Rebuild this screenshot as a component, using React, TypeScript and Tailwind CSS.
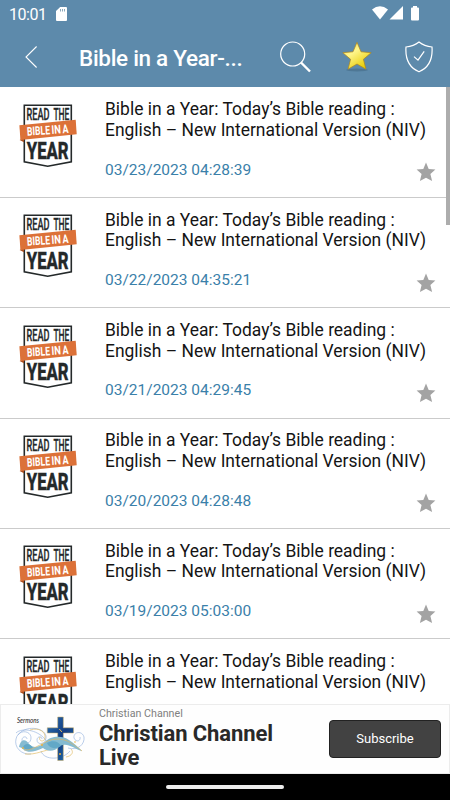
const readings = [
  "03/23/2023 04:28:39",
  "03/22/2023 04:35:21",
  "03/21/2023 04:29:45",
  "03/20/2023 04:28:48",
  "03/19/2023 05:03:00",
];

const STAR = "M10 0.6 L12.7 6.9 L19.4 7.5 L14.4 12 L16.1 19 L10 15.7 L3.9 19 L5.6 12 L0.6 7.5 L7.3 6.9 Z";

const ReadingLogo = () => (
  <svg className="mt-[7.4px] ml-2.5 h-20 w-20 shrink-0" viewBox="0 0 80 80" fontFamily="Roboto, sans-serif">
    <path d="M14.3 10.3 H61.3 V66.8 L37.7 71.2 L14.3 66.8 Z" fill="#fff" stroke="#24292a" strokeWidth="1.6" />
    <g fill="#24292a" stroke="#24292a">
      <text x="16.6" y="24.6" fontSize="15.8" fontWeight="500" strokeWidth="0.3" textLength="23" lengthAdjust="spacingAndGlyphs">READ</text>
      <text x="43.4" y="24.6" fontSize="15.8" fontWeight="500" strokeWidth="0.3" textLength="16" lengthAdjust="spacingAndGlyphs">THE</text>
      <text x="16.8" y="63.6" fontSize="24" fontWeight="800" strokeWidth="0.4" textLength="41.8" lengthAdjust="spacingAndGlyphs">YEAR</text>
    </g>
    <path d="M9.6 45 L14 43 V47.3 Z" fill="#a84d1d" />
    <path d="M9.4 30.3 L65.7 24.8 L66.7 39.2 L10.4 45.1 Z" fill="#dc7138" />
    <g fill="#fff" fontSize="12" fontWeight="700" transform="rotate(-4 37 35)">
      <text x="17" y="39.3" textLength="23" lengthAdjust="spacingAndGlyphs">BIBLE</text>
      <text x="41.4" y="39.3" textLength="9.4" lengthAdjust="spacingAndGlyphs">IN</text>
      <text x="52.6" y="39.3" textLength="6" lengthAdjust="spacingAndGlyphs">A</text>
    </g>
  </svg>
);

const SermonsLogo = () => (
  <svg className="h-[68px] w-[98px] shrink-0" viewBox="0 0 98 68" fill="none">
    <defs>
      <linearGradient id="cross" x1="0" y1="0" x2="1" y2="1">
        <stop offset="0" stopColor="#2d73b6" />
        <stop offset="0.5" stopColor="#113b80" />
        <stop offset="1" stopColor="#2479b8" />
      </linearGradient>
    </defs>
    <text x="16" y="18" fontSize="7" fontStyle="italic" fill="#222" fontFamily="Lato, sans-serif" textLength="22" lengthAdjust="spacingAndGlyphs">Sermons</text>
    <g stroke="#8dacdc" strokeWidth="0.6">
      <path d="M30 49 C20 50 13 42 15 34 C17 24 30 25 30 33 C30 40 21 40 21 35 C21 31 26 31 26 34" />
      <path d="M17 30 C24 20 43 22 45 31 C46 39 36 41 36 35 C36 31 41 31 41 34" />
      <path d="M67 43 C77 46 84 39 83 32 C81 25 72 27 73 33 C75 38 80 36 79 32" />
      <path d="M40 46 C43 56 62 55 69 46" />
      <path d="M15 28 C21 22 39 25 46 37" />
    </g>
    <g stroke="#e3bd68" strokeWidth="0.7">
      <path d="M29 25 C38 22 45 27 44 33 C43 38 37 36 39 32" />
      <path d="M48 40 C52 32 60 31 66 35" />
      <path d="M24 49 C35 50 43 45 52 44" />
      <path d="M65 52 C71 51 73 47 70 44" />
    </g>
    <path d="M56.7 12 H62.3 V22.8 H72.5 V28 H62.3 V55.5 H56.7 V28 H46.3 V22.8 H56.7 Z" fill="url(#cross)" stroke="#cfae62" strokeWidth="0.5" />
    <path d="M18 42 C20 33 25 34 28 39 C33 44 39 42 44 37 C49 31 61 30 68 35 C73 38 77 42 81 46 C72 43 66 37 59 41 C53 47 47 47 42 43 C34 47 27 48 23 45 Q20 42 18 42 Z" fill="#85bbd1" />
    <path d="M46 38 C51 35 58 36 60 41 C54 45 48 43 46 38 Z M22 42 C25 37 29 39 32 43 C28 46 24 45 22 42 Z" fill="#62a8c7" />
    <path d="M23 45 C34 46 44 34 56 34 C67 34 73 40 81 46" stroke="#dcb665" strokeWidth="0.7" />
    <path d="M58.3 24 L61 27" stroke="#e2b859" strokeWidth="1" />
    <g fill="#e8b13d">
      <circle cx="22" cy="43" r="0.9" />
      <circle cx="41" cy="40" r="1" />
      <circle cx="59" cy="49" r="1" />
      <circle cx="74" cy="37" r="0.8" />
    </g>
  </svg>
);

const Header = () => (
  <header className="h-[87.4px] shrink-0 bg-[#5d8aab] text-white">
    <div className="flex h-7 items-center pl-[9px] pr-[30px]">
      <span className="mt-px w-[38px] text-[16px] leading-5 tracking-[-0.45px] whitespace-nowrap">10:01</span>
      <svg className="ml-[9px] h-[15px] w-3" viewBox="0 0 12 15">
        <path d="M4.2 0 H10 Q11 0 11 1 V13 Q11 14 10 14 H1 Q0 14 0 13 V4 Z" fill="#fff" />
        <path d="M4.5 2 V4.5 M6.5 2 V4.5 M8.5 2 V4.5" stroke="#7f9fb3" strokeWidth="0.9" />
      </svg>
      <svg className="ml-auto h-4 w-[50px]" viewBox="0 0 50 16" fill="#fff">
        <path d="M2 3.6 Q10 -3 18 3.6 L10 13.5 Z" />
        <path d="M33 0 V13.5 H19.5 Z" />
        <path d="M43 0 H47 V1.5 H48 Q49 1.5 49 2.5 V13.5 Q49 14.5 48 14.5 H42 Q41 14.5 41 13.5 V2.5 Q41 1.5 42 1.5 H43 Z" />
      </svg>
    </div>
    <div className="flex h-[58px] items-center pl-[25px]">
      <svg className="h-6 w-3.5" viewBox="0 0 14 24" fill="none" stroke="#fff" strokeWidth="1.1">
        <path d="M11.6 1.5 L1 12 L11.6 22.5" />
      </svg>
      <h1 className="mt-px ml-10 w-[165px] text-[22.5px] leading-7 font-medium tracking-[-0.3px] whitespace-nowrap">Bible in a Year-...</h1>
      <svg className="ml-[35px] h-8 w-8" viewBox="0 0 32 32" fill="none" stroke="#fff">
        <circle cx="13.7" cy="13" r="12" strokeWidth="1.2" />
        <path d="M22 21.5 L31 30.5" strokeWidth="2.4" />
      </svg>
      <svg className="ml-[31px] h-8 w-[30px]" viewBox="0 0 30 32">
        <defs>
          <linearGradient id="gold" x1="0" y1="0" x2="0.7" y2="1">
            <stop offset="0" stopColor="#f2d53e" />
            <stop offset="0.42" stopColor="#fff68d" />
            <stop offset="1" stopColor="#e6ca00" />
          </linearGradient>
        </defs>
        <ellipse cx="15" cy="29" rx="11" ry="1.4" fill="#446b87" opacity="0.6" />
        <path d="M15 1.3 L19 10.8 L29.2 11.7 L21.4 18.3 L24 28.2 L15 23 L6 28.2 L8.6 18.3 L0.8 11.7 L11 10.8 Z" fill="url(#gold)" stroke="#ad851e" strokeWidth="0.7" />
      </svg>
      <svg className="ml-[33px] h-8 w-7" viewBox="0 0 28 32" fill="none" stroke="#fff" strokeWidth="1.2">
        <path d="M14 1 C10.5 3.8 6 5.5 1 6 C0.2 17 3.5 26.3 14 30.8 C24.5 26.3 27.8 17 27 6 C22 5.5 17.5 3.8 14 1 Z" />
        <path d="M9 15.6 L13 19.2 L19.2 10.4" />
      </svg>
    </div>
  </header>
);

const ReadingRow = ({ date }: { date?: string }) => (
  <article className="flex h-[110.4px] shrink-0 border-b border-[#cbcbcb]">
    <ReadingLogo />
    <div className="ml-[15px] w-[345px] shrink-0 pt-[11.8px]">
      <h2 className="text-[17.45px] leading-[20.7px] whitespace-nowrap text-[#141414]">
        Bible in a Year: Today’s Bible reading :<br />
        English – New International Version (NIV)
      </h2>
      {date && (
        <div className="mt-[16.7px] flex items-start justify-between pr-3.5">
          <time className="mt-[2.3px] text-[15.5px] leading-5 text-[#3a80a9]">{date}</time>
          <svg className="mt-[5px] h-5 w-5" viewBox="0 0 20 20">
            <path d={STAR} fill="#a3a3a3" />
          </svg>
        </div>
      )}
    </div>
  </article>
);

const App = () => {
  return (
    <div className="flex h-[800px] w-[450px] flex-col overflow-hidden bg-white font-['Roboto',sans-serif]">
      <Header />
      <main className="relative flex min-h-0 flex-1 flex-col overflow-hidden">
        {readings.map((date) => (
          <ReadingRow key={date} date={date} />
        ))}
        <ReadingRow />
        {/* Scroll thumb */}
        <div className="absolute top-0 right-0 h-[138px] w-1 bg-[#adadad]" />
      </main>
      <aside className="flex h-[70px] shrink-0 border border-[#ececec] bg-[#fefefe]">
        <SermonsLogo />
        <div className="w-[230px] shrink-0 pt-0.5">
          <p className="text-[10.7px] leading-[13px] text-[#808080]">Christian Channel</p>
          <p className="mt-[2px] text-[22px] leading-6 font-bold tracking-[-0.1px] text-[#292929]">
            Christian Channel<br />Live
          </p>
        </div>
        <button className="mt-[15px] h-[38px] w-28 shrink-0 rounded border border-[#222] bg-[#424242] text-[13px] text-white">Subscribe</button>
      </aside>
      <footer className="flex h-[26px] shrink-0 justify-center bg-black pt-[11px]">
        <div className="h-1 w-[118px] rounded-full bg-[#ededed]" />
      </footer>
    </div>
  );
};

export default App;
